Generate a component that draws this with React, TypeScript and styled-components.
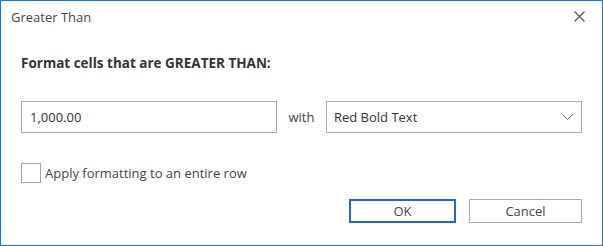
import React from 'react';
import styled, { createGlobalStyle } from 'styled-components';

const GlobalStyle = createGlobalStyle`
  html, body {
    margin: 0;
    padding: 0;
    background: #ffffff;
  }
  body {
    font-family: "Open Sans", "Noto Sans", "Liberation Sans", sans-serif;
    color: #333333;
  }
`;

const Window = styled.div`
  box-sizing: border-box;
  width: 603px;
  height: 246px;
  border: 1px solid #1979ca;
  background: #ffffff;
  display: flex;
  flex-direction: column;
`;

const TitleBar = styled.div`
  height: 31px;
  display: flex;
  align-items: center;
  justify-content: space-between;
  padding: 0 17px 0 10px;
`;

const Title = styled.span`
  font-size: 13px;
  color: #444444;
`;

const CloseButton = styled.button`
  width: 12px;
  height: 12px;
  padding: 0;
  border: none;
  background: transparent;
  display: flex;
  align-items: center;
  justify-content: center;
  cursor: pointer;
`;

const Body = styled.div`
  flex: 1;
  display: flex;
  flex-direction: column;
  padding: 0 20px 0 20px;
`;

const Heading = styled.h2`
  margin: 22px 0 0 0;
  font-size: 13.5px;
  line-height: 18px;
  font-weight: 700;
  color: #333333;
`;

const FieldRow = styled.div`
  display: flex;
  align-items: center;
  margin-top: 29px;
  height: 32px;
`;

const TextInput = styled.input`
  box-sizing: border-box;
  width: 257px;
  height: 32px;
  border: 1px solid #ababab;
  padding: 0 8px;
  font-family: inherit;
  font-size: 13px;
  color: #333333;
  outline: none;
`;

const WithLabel = styled.span`
  width: 49px;
  text-align: center;
  font-size: 13px;
  color: #444444;
`;

const Select = styled.div`
  box-sizing: border-box;
  width: 257px;
  height: 32px;
  border: 1px solid #ababab;
  display: flex;
  align-items: center;
  justify-content: space-between;
  padding: 0 8px 0 7px;
  font-size: 13px;
  color: #333333;
`;

const CheckRow = styled.label`
  display: flex;
  align-items: center;
  gap: 4px;
  margin-top: 30px;
  font-size: 13px;
  color: #444444;
`;

const CheckBox = styled.span`
  box-sizing: border-box;
  width: 20px;
  height: 20px;
  border: 1px solid #a5a5a5;
  background: #ffffff;
`;

const ButtonRow = styled.div`
  display: flex;
  justify-content: flex-end;
  gap: 13px;
  margin-top: 16px;
`;

const Button = styled.button<{ $primary?: boolean; $width: number }>`
  box-sizing: border-box;
  width: ${({ $width }) => $width}px;
  height: 24px;
  background: #ffffff;
  border: ${({ $primary }) => ($primary ? '2px solid #1a6dc2' : '1px solid #ababab')};
  font-family: inherit;
  font-size: 13px;
  color: #444444;
  padding: 0;
  cursor: pointer;
`;

export default function App() {
  return (
    <>
      <GlobalStyle />
      <Window>
        <TitleBar>
          <Title>Greater Than</Title>
          <CloseButton aria-label="Close">
            <svg width="11" height="11" viewBox="0 0 11 11">
              <path d="M0.5 0.5 L10.5 10.5 M10.5 0.5 L0.5 10.5" stroke="#555555" strokeWidth="1.2" />
            </svg>
          </CloseButton>
        </TitleBar>
        <Body>
          <Heading>Format cells that are GREATER THAN:</Heading>
          <FieldRow>
            <TextInput defaultValue="1,000.00" />
            <WithLabel>with</WithLabel>
            <Select>
              <span>Red Bold Text</span>
              <svg width="11" height="6" viewBox="0 0 11 6">
                <path d="M0.5 0.5 L5.5 5.5 L10.5 0.5" fill="none" stroke="#666666" strokeWidth="1" />
              </svg>
            </Select>
          </FieldRow>
          <CheckRow>
            <CheckBox />
            Apply formatting to an entire row
          </CheckRow>
          <ButtonRow>
            <Button $primary $width={107}>OK</Button>
            <Button $width={113}>Cancel</Button>
          </ButtonRow>
        </Body>
      </Window>
    </>
  );
}
